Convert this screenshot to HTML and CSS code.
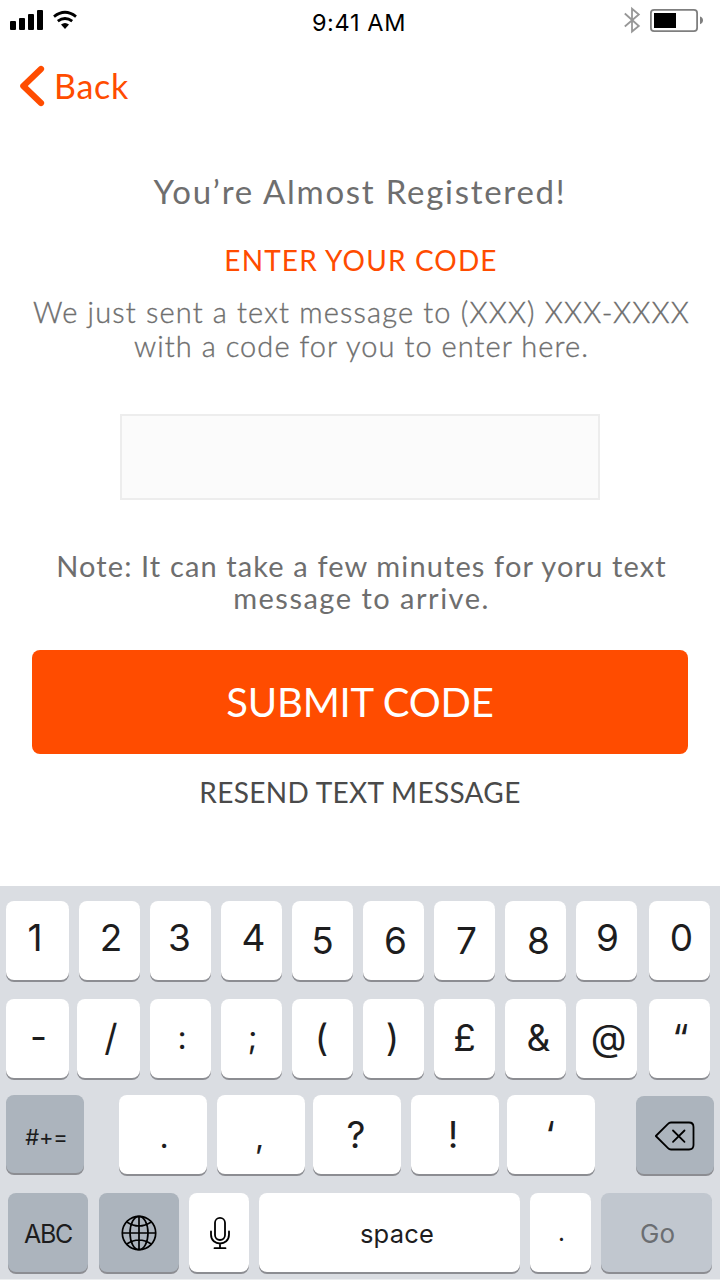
FILE: index.html
```html
<!DOCTYPE html>
<html lang="en">
<head>
<meta charset="utf-8">
<title>Enter your code</title>
<link rel="stylesheet" href="styles.css">
</head>
<body>
<div class="screen">
  <header class="status">
    <svg class="status-left" width="80" height="43" viewBox="0 0 80 43">
      <rect x="10" y="21" width="6" height="9" rx="1"/><rect x="19" y="18" width="6" height="12" rx="1"/><rect x="28" y="14" width="6" height="16" rx="1"/><rect x="37" y="10" width="6" height="20" rx="1"/>
      <g fill="none" stroke="#000" stroke-width="2.8"><path d="M54 16.600Q65 8 76 16.600"/><path d="M57.800 21.200Q65 15.800 72.200 21.200"/></g>
      <path d="M61 24.500Q65 21.500 69 24.500L65 29Z"/>
    </svg>
    <span class="clock">9:41 AM</span>
    <svg class="status-right" width="100" height="43" viewBox="0 0 100 43">
      <path d="M4.800 13.500L18.800 26L12 31.500V8.800L18.800 14.500L4.800 26.500" fill="none" stroke="#979797" stroke-width="1.800"/>
      <rect x="30.900" y="9.900" width="46.200" height="21.200" rx="3.200" fill="none" stroke="#7f7f7f" stroke-width="1.800"/>
      <rect x="34" y="13" width="22" height="15"/>
      <path d="M80 16.500Q83 17.500 83 20.300T80 24.200Z" fill="#7f7f7f"/>
    </svg>
  </header>

  <nav class="nav">
    <a class="back">
      <svg width="26" height="42" viewBox="0 0 26 42"><path d="M22 4L4.300 21L22 38" fill="none" stroke="#ff4c00" stroke-width="6.200" stroke-linecap="round" stroke-linejoin="round"/></svg>
      <span class="back-label">Back</span>
    </a>
  </nav>

  <main class="content">
    <h1 class="title">You’re Almost Registered!</h1>
    <h2 class="subtitle">ENTER YOUR CODE</h2>
    <p class="message"><span class="message-first">We just sent a text message to (XXX) XXX-XXXX</span><br>with a code for you to enter here.</p>
    <input class="code" type="text" aria-label="Code">
    <p class="note">Note: It can take a few minutes for yoru text<br><span class="note-last">message to arrive.</span></p>
    <button class="submit">SUBMIT CODE</button>
    <a class="resend">RESEND TEXT MESSAGE</a>
  </main>

  <section class="keyboard">
    <div class="row row-digits">
      <div class="key up l5 first">1</div><div class="key up r3">2</div><div class="key up l2">3</div><div class="key up r4">4</div><div class="key">5</div><div class="key r4">6</div><div class="key r4">7</div><div class="key r6">8</div><div class="key up r2">9</div><div class="key up r4">0</div>
    </div>
    <div class="row row-symbols">
      <div class="key r2 hyphen">-</div><div class="key r5">/</div><div class="key r3 small">:</div><div class="key r2 small">;</div><div class="key l2">(</div><div class="key l2">)</div><div class="key">£</div><div class="key r6">&amp;</div><div class="key r4">@</div><div class="key r2">“</div>
    </div>
    <div class="row row-punct">
      <div class="key dark more">#+=</div><div class="key r2 period">.</div><div class="key l3 period">,</div><div class="key l2">?</div><div class="key l4">!</div><div class="key l2">‘</div>
      <div class="key dark delete">
        <svg width="42" height="30" viewBox="0 0 42 30" fill="none" stroke="#000" stroke-width="1.800" stroke-linecap="round" stroke-linejoin="round"><path d="M1.800 15L14 2.800Q15.200 1.500 17 1.500H35Q39.500 1.500 39.500 6V24Q39.500 28.500 35 28.500H17Q15.200 28.500 14 27.200Z"/><path d="M19 9.500L30.500 20.900M30.500 9.500L19 20.900"/></svg>
      </div>
    </div>
    <div class="row row-bottom">
      <div class="key dark abc">ABC</div>
      <div class="key dark globe">
        <svg width="36" height="36" viewBox="0 0 36 36" fill="none" stroke="#000" stroke-width="1.700"><circle cx="18" cy="18" r="16.700"/><ellipse cx="18" cy="18" rx="9" ry="16.700"/><path d="M18 1.300V34.700M1.300 18H34.700M5.800 7Q18 15 30.200 7M5.800 29Q18 21 30.200 29"/></svg>
      </div>
      <div class="key mic">
        <svg width="22" height="34" viewBox="0 0 22 34" fill="none" stroke="#000" stroke-width="1.800" stroke-linecap="round"><rect x="6" y="1.800" width="10" height="22.200" rx="5"/><path d="M2 15.500V18.500C2 30.500 20 30.500 20 18.500V15.500M11 27.500V32M5.500 32.200H16.500"/></svg>
      </div>
      <div class="key space">space</div>
      <div class="key dot">.</div>
      <div class="key go">Go</div>
    </div>
  </section>
</div>
</body>
</html>
```

FILE: styles.css
```css
* { box-sizing: border-box; }

body {
  margin: 0;
  background: #fff;
  font-family: Lato, "Liberation Sans", sans-serif;
}

.screen {
  width: 720px;
  height: 1280px;
  display: flex;
  flex-direction: column;
  overflow: hidden;
}

svg { display: block; flex: none; }

.status {
  display: grid;
  grid-template-columns: 120px 1fr 120px;
  height: 43px;
}
.status-right { justify-self: end; }
.clock {
  font: 400 23.5px/45px Inter, sans-serif;
  letter-spacing: 0.65px;
  text-align: center;
  color: #000;
  padding-right: 2px;
}

.nav { padding: 22px 0 0 19px; height: 64px; }
.back {
  display: flex;
  gap: 9px;
  color: #ff4c00;
  font-size: 34px;
  line-height: 42px;
  letter-spacing: 0.7px;
}

.content {
  display: flex;
  flex-direction: column;
  align-items: center;
  height: 779px;
  padding: 64px 32px 0;
  text-align: center;
  color: #6e6e6e;
}
.title {
  margin: 0;
  font-size: 33px;
  font-weight: 400;
  line-height: 40px;
  letter-spacing: 1.74px;
}
.subtitle {
  margin: 32px 0 0;
  font-size: 28px;
  font-weight: 400;
  line-height: 34px;
  letter-spacing: 1.14px;
  padding-left: 2px;
  color: #ff4c00;
}
.message {
  margin: 18px -20px 0;
  font-size: 29px;
  font-weight: 300;
  line-height: 34px;
  letter-spacing: 1.06px;
  padding-left: 3px;
  white-space: nowrap;
  -webkit-text-stroke: 0.35px #6e6e6e;
}
.message-first { letter-spacing: 1.17px; }
.code {
  width: 480px;
  height: 86px;
  margin: 51px 0 0;
  padding: 0 16px;
  border: 2px solid #ededed;
  border-radius: 0;
  background: #fbfbfb;
  font: 400 32px Lato, sans-serif;
  outline: none;
}
.note {
  margin: 50px 0 0;
  font-size: 29px;
  line-height: 32px;
  letter-spacing: 1.12px;
  padding-left: 3px;
  white-space: nowrap;
}
.note-last { letter-spacing: 1.5px; }
.submit {
  width: 656px;
  height: 104px;
  margin: 36px 0 0;
  padding: 0 0 1px;
  border: 0;
  border-radius: 8px;
  background: #ff4c00;
  color: #fff;
  font: 400 40px Lato, sans-serif;
  letter-spacing: -0.2px;
}
.resend {
  margin-top: 21px;
  font-size: 28px;
  line-height: 34px;
  letter-spacing: 0.33px;
  color: #4a4a4a;
}

.keyboard {
  height: 394px;
  padding: 15px 6px 0;
  background: #dadde2;
  border-bottom: 1px solid #eceef0;
  font: 400 37px Inter, sans-serif;
  color: #1d1d1e;
}
.row { display: flex; gap: 10px; height: 79px; }
.row-symbols { margin-top: 19px; }
.row-punct { margin-top: 17px; }
.row-bottom { margin-top: 19px; padding-left: 2px; }

.key {
  display: flex;
  align-items: center;
  justify-content: center;
  flex: none;
  width: 61px;
  height: 79px;
  border-radius: 8px;
  background: #fff;
  box-shadow: 0 2px 0 #8c8d92;
}
.row-digits .key:first-child,
.row-symbols .key:first-child { width: 63px; }
.row-digits .key:last-child,
.row-symbols .key:last-child { margin-left: 2px; }
.row-symbols .key { padding-bottom: 2px; }
.row-symbols .key:nth-child(2) { width: 63px; margin-left: -2px; }
.row-punct .key { width: 88px; }
.row-punct .key:nth-child(2) { margin-left: 25px; }
.row-punct .key:nth-child(4),
.row-punct .key:nth-child(6) { margin-left: -2px; }

/* Optical adjustments of the key labels */
.up { padding-bottom: 6px; }
.l2 { padding-right: 2px; }
.l3 { padding-right: 3px; }
.l4 { padding-right: 4px; }
.l5 { padding-right: 5px; }
.r2 { padding-left: 2px; }
.r3 { padding-left: 3px; }
.r4 { padding-left: 4px; }
.r5 { padding-left: 5px; }
.r6 { padding-left: 6px; }
.row-symbols .hyphen { padding-bottom: 5px; }
.small { font-size: 32px; }
.period { font-size: 32px; padding-top: 4px; }

.key.dark { background: #acb4bd; }
.row-punct .more {
  width: 78px;
  height: 78px;
  padding: 5px 0 0 3px;
  font-size: 22px;
  letter-spacing: -0.2px;
}
.row-punct .delete { width: 78px; height: 78px; margin: 1px 0 0 31px; padding-top: 1px; }
.abc { width: 80px; font-size: 25px; letter-spacing: -1.3px; padding: 3px 0 0; }
.globe { width: 80px; margin-left: 1px; }
.mic { width: 60px; padding: 1px 0 0 1px; }
.space { width: 261px; font-size: 25.5px; letter-spacing: 0.2px; padding: 2px 0 0 15px; }
.dot { font-size: 24px; padding-left: 2px; }
.row .go { width: 111px; background: #c1c7cf; color: #6b6e72; font-size: 26px; padding: 1px 0 0 2px; }
```
